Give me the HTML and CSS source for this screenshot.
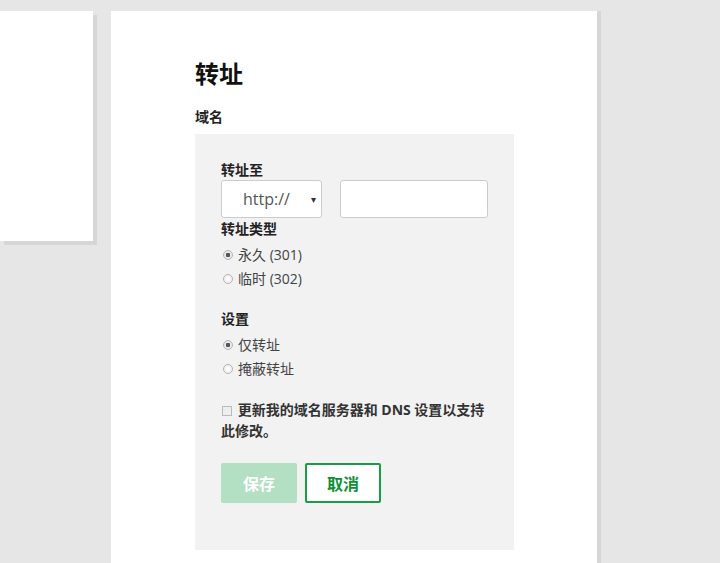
FILE: index.html
```html
<!DOCTYPE html>
<html lang="zh-CN">
<head>
    <meta charset="UTF-8">
    <meta name="viewport" content="width=device-width, initial-scale=1.0">
    <title>转址</title>
    <link rel="stylesheet" href="styles.css">
</head>
<body>
    <div class="page">
        <div class="side-card"></div>
        <div class="main-card">
            <h1>转址</h1>
            <div class="domain-label">域名</div>
            <form class="panel">
                <label class="field-label" for="target">转址至</label>
                <div class="url-row">
                    <div class="select-box">
                        <span>http://</span>
                        <span class="caret">&#9662;</span>
                    </div>
                    <input type="text" id="target" class="url-input">
                </div>
                <div class="field-label">转址类型</div>
                <div class="options">
                    <label class="option"><input type="radio" name="type" checked> 永久 (301)</label>
                    <label class="option"><input type="radio" name="type"> 临时 (302)</label>
                </div>

                <div class="field-label section">设置</div>
                <div class="options">
                    <label class="option"><input type="radio" name="mode" checked> 仅转址</label>
                    <label class="option"><input type="radio" name="mode"> 掩蔽转址</label>
                </div>

                <label class="check"><input type="checkbox"> 更新我的域名服务器和 DNS 设置以支持此修改。</label>

                <div class="actions">
                    <button type="submit" class="btn-save" disabled>保存</button>
                    <button type="button" class="btn-cancel">取消</button>
                </div>
            </form>
        </div>
    </div>
</body>
</html>
```

FILE: styles.css
```css
body {
    margin: 0;
    background-color: #e6e6e6;
    font-family: "Open Sans", "Noto Sans CJK SC", sans-serif;
    color: #222;
    overflow: hidden;
}
.page {
    display: flex;
    align-items: flex-start;
    padding-top: 11px;
}
.side-card {
    width: 93px;
    height: 230px;
    background: #fff;
    box-shadow: 4px 4px 0 #d6d6d6;
}
.main-card {
    width: 402px;
    min-height: 600px;
    margin-left: 18px;
    padding: 44px 0 0 84px;
    background: #fff;
    box-shadow: 4px 0 0 #d6d6d6;
}
h1 {
    margin: 0;
    font-size: 24px;
    line-height: 38px;
    font-weight: bold;
    color: #111;
}
.domain-label {
    margin-top: 14px;
    font-size: 14px;
    font-weight: bold;
    line-height: 20px;
}
.panel {
    width: 293px;
    margin-top: 7px;
    padding: 26px 0 47px 26px;
    background: #f2f2f2;
}
.field-label {
    display: block;
    font-size: 14px;
    font-weight: bold;
    line-height: 20px;
    color: #222;
}
.field-label.section {
    margin-top: 18px;
}
.url-row {
    display: flex;
    gap: 18px;
    margin-bottom: 1px;
}
.select-box {
    box-sizing: border-box;
    width: 101px;
    height: 38px;
    display: flex;
    align-items: center;
    justify-content: space-between;
    padding: 0 5px 0 21px;
    background: #fff;
    border: 1px solid #ccc;
    border-radius: 3px;
    font-size: 16px;
    color: #555;
}
.caret {
    font-size: 10px;
    color: #333;
}
.url-input {
    box-sizing: border-box;
    width: 148px;
    height: 38px;
    border: 1px solid #ccc;
    border-radius: 3px;
    background: #fff;
}
.options {
    margin-top: 4px;
}
.option {
    display: flex;
    align-items: center;
    gap: 4px;
    font-size: 14px;
    line-height: 24px;
    color: #444;
}
.option input {
    appearance: none;
    box-sizing: border-box;
    width: 10px;
    height: 10px;
    margin: 0 1px 0 2px;
    border: 1px solid #b5b5b5;
    border-radius: 50%;
    background: radial-gradient(#fff, #e8e8e8);
}
.option input:checked {
    background: radial-gradient(#555 0 2px, #e8e8e8 2.5px);
}
.check {
    display: block;
    margin-top: 18px;
    width: 270px;
    font-size: 14px;
    font-weight: bold;
    line-height: 21px;
    color: #333;
}
.check input {
    appearance: none;
    box-sizing: border-box;
    width: 10px;
    height: 10px;
    margin: 0 2px 0 1px;
    border: 1px solid #bbb;
    background: #eee;
    vertical-align: -1px;
}
.actions {
    display: flex;
    gap: 8px;
    margin-top: 22px;
}
.actions button {
    box-sizing: border-box;
    width: 76px;
    height: 40px;
    border-radius: 2px;
    font-family: inherit;
    font-size: 16px;
    font-weight: bold;
}
.btn-save {
    background: #b3dfc3;
    color: #fff;
    border: none;
}
.btn-cancel {
    background: #fff;
    color: #0f9038;
    border: 2px solid #1a9b45;
}
```
